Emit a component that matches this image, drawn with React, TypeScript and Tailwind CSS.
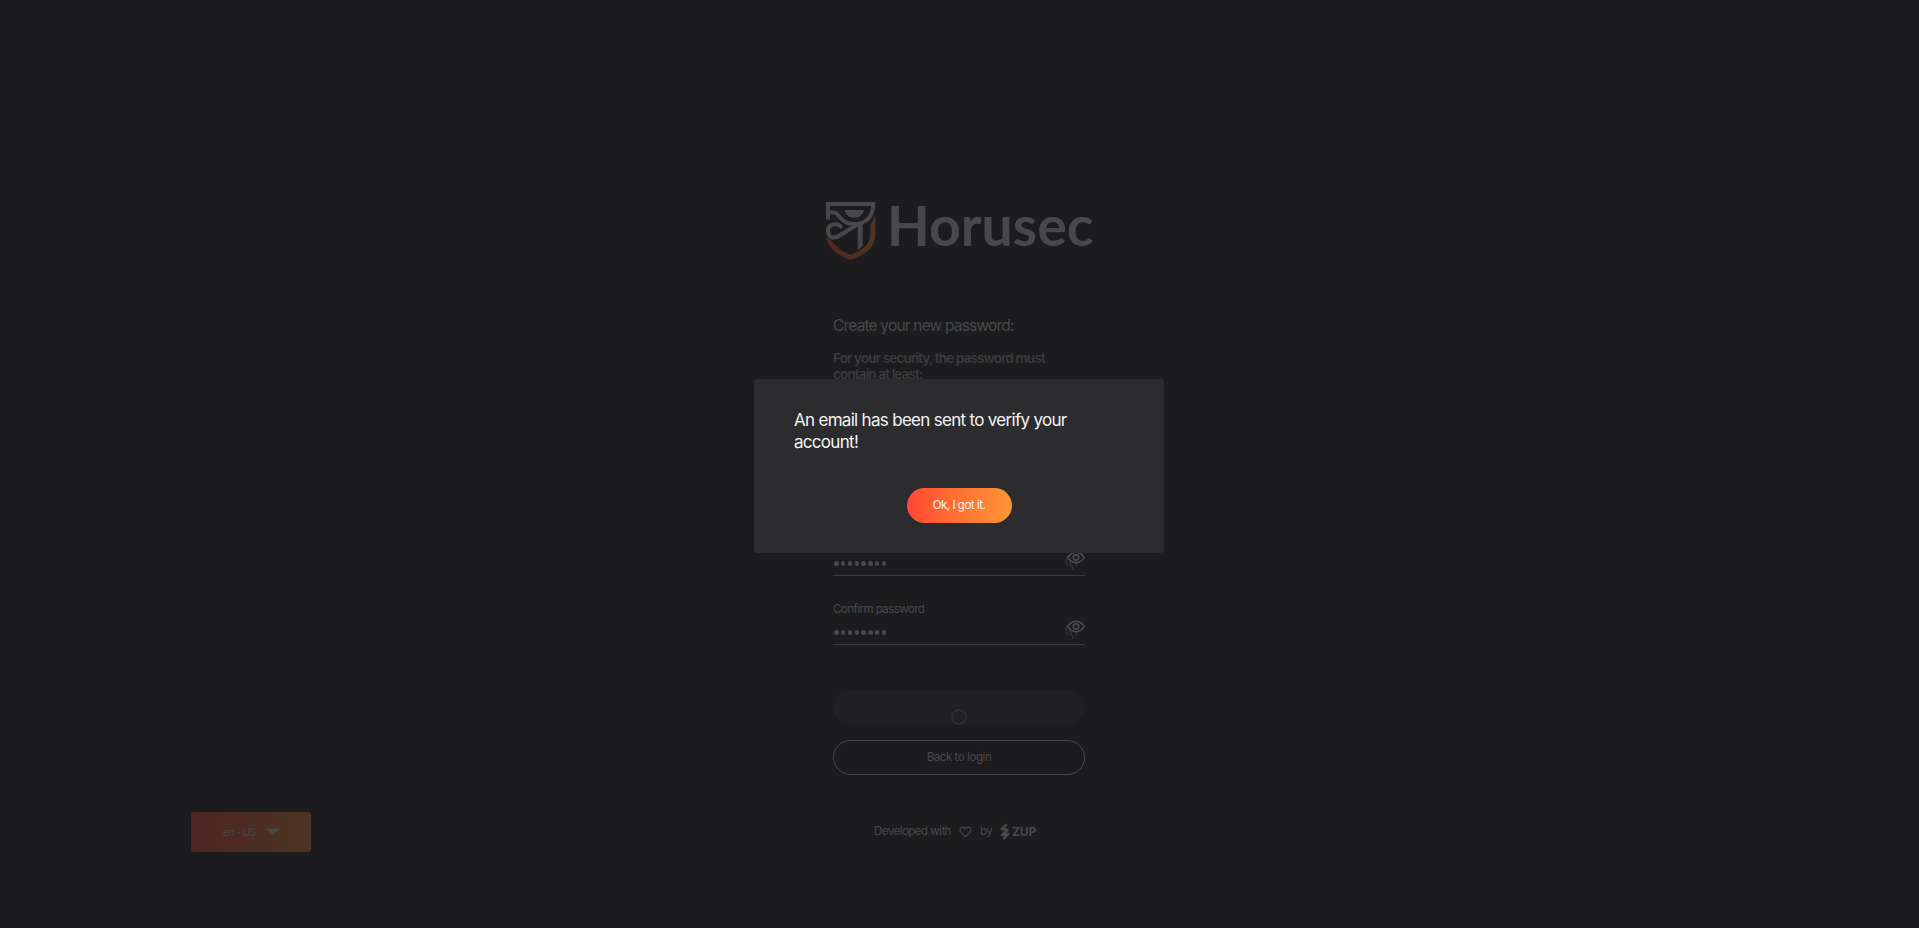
function Logo() {
  return (
    <div className="flex h-[58px] pl-[826px] text-[#48484a]">
      <svg width="50" height="58" viewBox="48 36 150 174" fill="none" stroke="currentColor" strokeWidth="12">
        <defs>
          <linearGradient id="shield" x1="48" y1="0" x2="196" y2="0" gradientUnits="userSpaceOnUse">
            <stop stopColor="#522521" />
            <stop offset="1" stopColor="#4d3520" />
          </linearGradient>
        </defs>
        <path d="M48 142 C58 145 61 147 65 153 C80 173 99 187 122 194 C151 184 181 166 181 133 V103 C187 96 192 86 196 73 V133 C196 176 157 200 122 209 C88 200 53 175 48 142Z" fill="url(#shield)" stroke="none" />
        <path d="M54 84 V42 H190 C190 78 169 102 134 102 C103 102 92 85 82 73 C78 68 72 66 56 66" strokeLinecap="round" />
        <path d="M104 60 H162 C158 76 149 83 133 83 C117 83 108 76 104 60Z" fill="currentColor" stroke="none" />
        <path d="M92 110 C84 99 54 100 54 122 C54 144 74 146 86 138 L143 103" strokeLinecap="round" />
        <path d="M143 104 L158 98 V169 L143 180Z" fill="currentColor" stroke="none" />
      </svg>
      <span className="-mt-[11px] ml-[11px] font-['Lato',sans-serif] text-[55.5px] leading-[68px] font-bold">Horusec</span>
    </div>
  );
}

function PasswordField() {
  return (
    <div className="flex h-[25px] items-start justify-between border-b border-[#3a3a3c] text-[#48484a]">
      <div className="flex gap-[2.3px] pt-[10px] pl-[1.2px]">
        {Array.from({ length: 8 }, (_, i) => (
          <span key={i} className="size-[4.5px] rounded-full bg-[#48484a]" />
        ))}
      </div>
      <svg width="20" height="20" viewBox="0 0 20 20" fill="none" stroke="currentColor">
        <path d="M3.6 4 C.2 8 .7 12 2.8 15.5 M5.5 10 C4.5 13 6 15 8 16 M7 17.5 H9 M12 12 L11 16" stroke="#303032" strokeWidth="1.8" />
        <path d="M2.8 6.5 C5 3 7.8 1.4 11 1.4 C14.2 1.4 17 3 19.2 6.5 C17 10 14.2 11.6 11 11.6 C7.8 11.6 5 10 2.8 6.5Z" strokeWidth="1.6" />
        <circle cx="11" cy="6.5" r="2.7" strokeWidth="1.7" />
      </svg>
    </div>
  );
}

function Modal() {
  return (
    <div className="fixed inset-0 flex items-start justify-center pt-[379px] pr-px">
      <div className="flex h-[174px] w-[410px] flex-col items-center rounded-[4px] bg-[#2c2c2e] pt-[30px]">
        <h2 className="w-[330px] text-[17px] leading-[22px] font-normal tracking-[-0.7px] text-[#f4f4f6]">
          An email has been sent to verify your
          <br />
          account!
        </h2>
        <button className="mt-[35px] h-[35px] w-[105px] rounded-full bg-linear-to-r from-[#ff4632] to-[#ff9636] text-[11.5px] tracking-[-0.47px] text-[#f4f4f6]">
          Ok, I got it.
        </button>
      </div>
    </div>
  );
}

export default function App() {
  return (
    <div className="h-[928px] overflow-hidden bg-[#1c1c1e] pt-[202px] font-['Inter',sans-serif] whitespace-nowrap text-[#48484a]">
      <Logo />
      <main className="ml-[833px] flex h-[516px] w-[252px] flex-col pt-[56px]">
        <h1 className="text-[15.5px] leading-5 tracking-[-0.82px]">Create your new password:</h1>
        <p className="mt-[14px] h-[186px] text-[13.5px] leading-4 font-semibold tracking-[-0.85px] text-[#3a3a3c]">
          For your security, the password must
          <br />
          contain at least:
        </p>
        <div className="mt-[15px]">
          <PasswordField />
        </div>
        <label className="mt-[25px] text-[11.5px] leading-4 tracking-[-0.54px]">Confirm password</label>
        <div className="mt-[3px]">
          <PasswordField />
        </div>
        <button className="mt-[45px] flex h-[35px] shrink-0 items-end justify-center rounded-full bg-[#202022]">
          <span className="size-4 rounded-full border-[2.5px] border-[#2e2e30]" />
        </button>
        <button className="mt-[15px] h-[35px] shrink-0 rounded-full border border-[#48484a] text-[11.5px] tracking-[-0.42px]">Back to login</button>
      </main>
      <footer className="mt-[36px] flex h-10 items-center pl-[191px]">
        <button className="flex h-10 w-[120px] items-center rounded-[3px] bg-linear-to-r from-[#4e2523] to-[#4b3421] pl-8 text-[10px]">
          <span className="w-[43px] text-left tracking-[-0.45px]">en - US</span>
          <svg width="14" height="8" viewBox="0 0 14 8" fill="currentColor"><path d="M0 0.5 H14 L7 7.5Z" /></svg>
        </button>
        <div className="ml-[563px] flex items-center text-[11.5px] tracking-[-0.52px]">
          <span className="w-[85px]">Developed with</span>
          <svg width="13" height="12" viewBox="0 0 13 12" fill="none" stroke="currentColor" strokeWidth="1.2"><path d="M6.5 10.7 C4 8.5 1 6.5 1 3.8 C1 .8 4.8 .2 6.5 2.7 C8.2 .2 12 .8 12 3.8 C12 6.5 9 8.5 6.5 10.7Z" /></svg>
          <span className="ml-2 w-[20px]">by</span>
          <svg width="10" height="18" viewBox="0 0 10 18" fill="none" stroke="currentColor" strokeWidth="2.4" strokeLinecap="round" strokeLinejoin="round"><path d="M6 2 L1.7 6 L7.7 7 L2 12 L8.2 11 L4 15.5" /></svg>
          <span className="ml-[2px] text-[12px] font-bold tracking-[-0.1px]">ZUP</span>
        </div>
      </footer>
      <Modal />
    </div>
  );
}
